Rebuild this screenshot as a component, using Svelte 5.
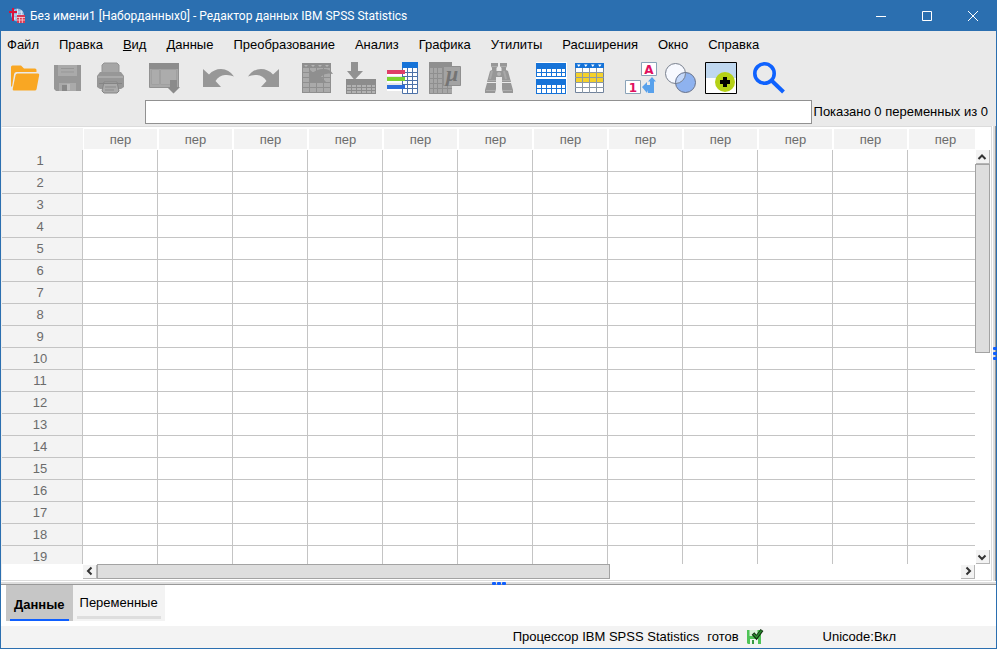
<script>
  const menus = ['Файл', 'Правка', 'Вид', 'Данные', 'Преобразование', 'Анализ', 'Графика', 'Утилиты', 'Расширения', 'Окно', 'Справка'];
  const columns = Array.from({ length: 12 }, (_, i) => i);
  const rows = Array.from({ length: 19 }, (_, i) => i + 1);
  let query = $state('');
  let tab = $state('data');
</script>

<div class="window">
  <header class="titlebar">
    <svg class="logo" viewBox="0 0 16 16" aria-hidden="true">
      <circle cx="8.5" cy="7" r="6.5" fill="#8fb4dc" />
      <path d="M3 4h11M2.500 7h12M4 10h10M8.500 1v12M5 2q-2 5 1 10M12 2q2 5-1 10" stroke="#e6f0fa" stroke-width=".8" fill="none" />
      <path d="M0 3h3V0h2v3h3v2H5v8H3V5H0z" fill="#d8123c" />
      <path d="M8 7h8v8H8z" fill="#d93a55" />
      <path d="M8 9.500h8M8 12h8M10.500 9v6M13.300 9v6" stroke="#fbd5dc" stroke-width=".8" />
    </svg>
    <span class="title">Без имени1 [Наборданных0] - Редактор данных IBM SPSS Statistics</span>
    <div class="caption">
      <button aria-label="Свернуть"><svg viewBox="0 0 10 10"><path d="M0 5.500h10" /></svg></button>
      <button aria-label="Развернуть"><svg viewBox="0 0 10 10"><path d="M.5.5h9v9h-9z" /></svg></button>
      <button aria-label="Закрыть"><svg viewBox="0 0 10 10"><path d="M0 0l10 10M10 0L0 10" /></svg></button>
    </div>
  </header>

  <nav class="menubar">
    {#each menus as item}
      <button>{#if item === 'Вид'}<u>В</u>ид{:else}{item}{/if}</button>
    {/each}
  </nav>

  <div class="toolbar">
    <div class="group">
      <button aria-label="Открыть">
        <svg viewBox="0 0 32 32"><path d="M2 5q0-1.500 1.500-1.500h8.500l3 3h11q1.500 0 1.500 1.500v2H7.500q-2 0-2.400 2L3 25 2 24z" fill="#f9a723" /><path d="M8.500 11.500H29q1.500 0 1.200 1.500l-2.600 14q-.3 1.500-1.800 1.500H5q-1.500 0-1.300-1.500L6.600 13q.3-1.500 1.900-1.500z" fill="#f9a723" /></svg>
      </button>
      <button aria-label="Сохранить">
        <svg viewBox="0 0 32 32"><path d="M2 3h27v26H4l-2-2z" fill="#979797" /><path d="M6 3h19v11H6zM7 21h17v8H7z" fill="#aaa" /><path d="M9 6.500h13M9 10h13" stroke="#979797" /><path d="M10 23h5v6h-5z" fill="#888" /><path d="M15 22h3v6h-3z" fill="#bbb" /></svg>
      </button>
      <button aria-label="Печать">
        <svg viewBox="0 0 32 32"><path d="M9 1h13l2 2v8H7V3z" fill="#a6a6a6" stroke="#949494" /><path d="M5 10h21l3 4v11l-3 2H5l-3-2V14z" fill="#979797" /><path d="M3 15h25" stroke="#aaa" stroke-width="2" /><path d="M9 20h13l2 9-2 2H9l-2-2z" fill="#aaa" stroke="#858585" /><path d="M4 21.500h23" stroke="#858585" /><path d="M10 25h11M10 28h9" stroke="#8b8b8b" /></svg>
      </button>
    </div>
    <div class="group">
      <button aria-label="Недавние диалоги">
        <svg viewBox="0 0 32 32"><path d="M.5 1.500h29v24h-29z" fill="#a8a8a8" stroke="#929292" /><path d="M0 1h30v6H0z" fill="#8d8d8d" /><path d="M2.500 7.500h8v15h-8zM11.500 7.500h16v15h-16z" fill="#acacac" stroke="#a0a0a0" /><path d="M21 18h7v7h3l-6.500 6.500L18 25h3z" fill="#8b8b8b" /></svg>
      </button>
    </div>
    <div class="group">
      <button aria-label="Отменить">
        <svg viewBox="0 0 32 32"><path d="M0 7l6 5.500Q11 7 18 7q8 0 13 7.500-4-2-9-1.500-6 .5-9.500 6l5.500 6H0z" fill="#979797" /></svg>
      </button>
      <button aria-label="Повторить">
        <svg viewBox="0 0 32 32"><path d="M33 7l-6 5.500Q22 7 15 7 7 7 2 14.500q4-2 9-1.500 6 .5 9.500 6L15 25h18z" fill="#979797" /></svg>
      </button>
    </div>
    <div class="group">
      <button aria-label="Перейти к наблюдению">
        <svg viewBox="0 0 32 32"><path d="M2 1h29v30H2z" fill="#8f8f8f" /><path d="M3 6h6v4H3zM10 6h6v4h-6zM17 6h6v4h-6zM24 6h6v4h-6zM3 11h6v4H3zM10 11h6v4h-6zM17 11h6v4h-6zM24 11h6v4h-6zM3 16h6v4H3zM10 16h6v4h-6zM17 16h6v4h-6zM24 16h6v4h-6zM3 21h6v4H3zM10 21h6v4h-6zM17 21h6v4h-6zM24 21h6v4h-6zM3 26h6v4H3zM10 26h6v4h-6zM17 26h6v4h-6zM24 26h6v4h-6z" fill="#aaa" /><path d="M4 3h4l-2 2zM11 3h4l-2 2zM18 3h4l-2 2zM25 3h4l-2 2z" fill="#b5b5b5" /><path d="M9 7l4 3.500q5-4 11-3.500 6 0 9 5-7-2-12 2.500l5 5.500H9z" fill="#8f8f8f" /></svg>
      </button>
      <button aria-label="Перейти к переменной">
        <svg viewBox="0 0 32 32"><path d="M3 17h30v15H3z" fill="#8c8c8c" /><path d="M4 23h28v8H4z" fill="#b2b2b2" /><path d="M4 25.500h28M4 28.500h28M8.500 23v8M13.500 23v8M18.500 23v8M23.500 23v8M28.500 23v8" stroke="#8c8c8c" /><path d="M8 0h7v9h5l-8.500 9L4 9h4z" fill="#929292" /></svg>
      </button>
      <button aria-label="Переменные">
        <svg viewBox="0 0 32 32"><path d="M16.500.5h15v31h-15z" fill="#fff" stroke="#4d72a8" /><path d="M16 0h16v6H16z" fill="#1673d8" /><path d="M16 10.500h16M16 14.500h16M16 18.500h16M16 22.500h16M16 26.500h16M21.500 6v26M26.500 6v26" stroke="#4d72a8" /><path d="M1 12h15v2H1zM1 19h15v2H1zM1 27h15v2H1z" fill="#fff" /><path d="M1 8h18v4H1z" fill="#df3f68" /><path d="M1 15h18v4H1z" fill="#7bd331" /><path d="M1 23h18v4H1z" fill="#2c6edb" /></svg>
      </button>
      <button aria-label="Описательные статистики">
        <svg viewBox="0 0 32 32"><path d="M0 0h23v32H0z" fill="#8f8f8f" /><path d="M0 6h23v26H0z" fill="#a6a6a6" /><path d="M.5 6v25.500h22M0 11.500h23M0 16.500h23M0 21.500h23M0 26.500h23M4.500 5v27M8.500 5v27M13.500 5v27M18.500 5v27" stroke="#8f8f8f" fill="none" /><path d="M14.500 4.500h17v19h-17z" fill="#a3a3a3" stroke="#8f8f8f" /><text x="17" y="19" font-family="Liberation Serif, serif" font-style="italic" font-weight="bold" font-size="22" fill="#747474">μ</text></svg>
      </button>
    </div>
    <div class="group">
      <button aria-label="Найти">
        <svg viewBox="0 0 32 32"><path d="M8 1h7v3l-1.500 2v3h5V6L17 4V1h7v3l-1 2v2l2 1 3 11H19v-5h-6v5H4L7 9l2-1V6L8 4zM4 21h9v6l-1 4H2v-3zM19 21h9l2 7v3H20l-1-4z" fill="#979797" /><path d="M8 4.500h6M18 4.500h6M5 18.500h8M19 18.500h8M3 28.500h9M20 28.500h9" stroke="#adadad" /><path d="M9 9l-2 8M21 9l2 8" stroke="#a8a8a8" stroke-width="2" /><circle cx="16" cy="12" r="2" fill="#b5b5b5" /></svg>
      </button>
    </div>
    <div class="group tight">
      <button aria-label="Расщепить файл">
        <svg viewBox="0 0 32 32"><path d="M3 0h31v32H3z" fill="#fff" /><path d="M3 1h30v14H3zM3 17h30v15H3z" fill="#1673d8" /><path d="M4 7h28v7H4zM4 23h28v8H4z" fill="#fff" /><path d="M3 10.500h30M3 26.500h30M8.500 7v8M13.500 7v8M18.500 7v8M23.500 7v8M28.500 7v8M8.500 23v8M13.500 23v8M18.500 23v8M23.500 23v8M28.500 23v8" stroke="#1673d8" /></svg>
      </button>
      <button aria-label="Отобрать наблюдения">
        <svg viewBox="0 0 32 32"><path d="M2.500 1.500h28v29h-28z" fill="#fff" stroke="#71839c" /><path d="M2 1h29v5H2z" fill="#1673d8" /><path d="M3 11h27v9H3z" fill="#f4d12b" /><path d="M2 10.500h29M2 15.500h29M2 20.500h29M2 25.500h29M9.500 6v25M16.500 6v25M23.500 6v25" stroke="#8b98a5" /><path d="M4 2.500h3.500L5.800 5zM11 2.500h3.500L12.800 5zM18 2.500h3.500L19.800 5zM25 2.500h3.500L26.800 5z" fill="#fff" /></svg>
      </button>
    </div>
    <div class="group tight">
      <button aria-label="Метки значений">
        <svg viewBox="0 0 32 32"><path d="M18.500.5h15v13h-15zM2.500 18.500h15v13h-15z" fill="#fff" stroke="#8aa3b8" /><text x="26" y="11.500" text-anchor="middle" font-family="DejaVu Sans, sans-serif" font-weight="bold" font-size="12" fill="#e0115f">A</text><text x="10" y="29.500" text-anchor="middle" font-family="DejaVu Sans, sans-serif" font-weight="bold" font-size="12" fill="#e0115f">1</text><path d="M29 15l4 4.500h-2V31h-6l-1-3v3l-5-6 5-5v3h3v-3.500h-2z" fill="#58a1ec" /></svg>
      </button>
      <button aria-label="Наборы переменных">
        <svg viewBox="0 0 32 32"><circle cx="12.500" cy="11.500" r="10" fill="#f7f9ff" /><circle cx="22.500" cy="20.500" r="10" fill="#7ea8f0" fill-opacity=".85" /><path d="M22.500 11.500A10 10 0 0 1 12.500 21.400 10 10 0 0 1 22.500 10.500z" fill="#c4d8fa" /><circle cx="12.500" cy="11.500" r="10" fill="none" stroke="#78808e" /><circle cx="22.500" cy="20.500" r="10" fill="none" stroke="#66718a" /></svg>
      </button>
      <button aria-label="Показать все переменные">
        <svg viewBox="0 0 32 32"><path d="M2.500.5h31v31h-31z" fill="#fff" stroke="#000" /><path d="M3 1h30v15H3z" fill="#bfd7ef" /><circle cx="22" cy="20" r="10" fill="#b5d117" /><path d="M20 15h4v3h3v4h-3v3h-4v-3h-3v-4h3z" fill="#000" /></svg>
      </button>
    </div>
    <div class="group tight">
      <button aria-label="Поиск">
        <svg viewBox="0 0 32 32"><circle cx="11.500" cy="11.500" r="9.700" fill="none" stroke="#0f62fe" stroke-width="3.600" /><path d="M18.500 18.500L30.500 30" stroke="#0f62fe" stroke-width="4" /></svg>
      </button>
    </div>
  </div>

  <div class="editor-line">
    <input id="cell" type="text" bind:value={query} />
    <label for="cell">Показано 0 переменных из 0</label>
  </div>

  <main class="workspace">
    <div class="pane">
      <div class="upper">
        <div class="sheet">
          <table>
            <thead>
              <tr><td class="corner"></td>{#each columns as c (c)}<th scope="col"><span>пер</span></th>{/each}</tr>
            </thead>
            <tbody>
              {#each rows as r (r)}
                <tr><th scope="row">{r}</th>{#each columns as c (c)}<td></td>{/each}</tr>
              {/each}
            </tbody>
          </table>
        </div>
        <div class="vscroll">
          <button class="step" aria-label="Вверх"><svg viewBox="0 0 10 10"><path d="M1.500 7L5 3.500 8.500 7" /></svg></button>
          <div class="track"><div class="thumb"></div></div>
          <button class="step" aria-label="Вниз"><svg viewBox="0 0 10 10"><path d="M1.500 3.500L5 7l3.500-3.500" /></svg></button>
        </div>
      </div>
      <div class="hscroll">
        <button class="step" aria-label="Влево"><svg viewBox="0 0 10 10"><path d="M6.500 1.500L3 5l3.500 3.500" /></svg></button>
        <div class="track"><div class="thumb"></div></div>
        <button class="step" aria-label="Вправо"><svg viewBox="0 0 10 10"><path d="M3.500 1.500L7 5 3.500 8.500" /></svg></button>
      </div>
    </div>
    <div class="split-v"><span class="dots"><i></i><i></i><i></i></span></div>
  </main>
  <div class="split-h"><span class="dots"><i></i><i></i><i></i></span></div>

  <div class="tabs" role="tablist">
    <button role="tab" class:active={tab === 'data'} aria-selected={tab === 'data'} onclick={() => (tab = 'data')}><span>Данные</span></button>
    <button role="tab" class:active={tab === 'vars'} aria-selected={tab === 'vars'} onclick={() => (tab = 'vars')}><span>Переменные</span></button>
  </div>

  <footer class="status">
    <span>Процессор IBM SPSS Statistics</span>
    <span>готов</span>
    <svg viewBox="0 0 16 16" aria-hidden="true"><path d="M0 1h14v14H1l-1-1z" fill="#4fc457" /><path d="M2.500 1h8v6h-8z" fill="#d9f2da" /><path d="M3 10h8v5H3z" fill="#eef8ee" /><path d="M5 11h2v4H5z" fill="#3a9a42" /><path d="M6 4.500l3.500 4L15 1" fill="none" stroke="#10300f" stroke-width="3.500" /><path d="M6.500 5L9.500 8 14.500 1.500" fill="none" stroke="#2a8a30" stroke-width="1.500" /></svg>
    <span class="unicode">Unicode:Вкл</span>
  </footer>
</div>

<style>
  :global(body) { margin: 0; }
  .window {
    box-sizing: border-box;
    height: 100vh;
    display: flex;
    flex-direction: column;
    border: 1px solid #2b6fb0;
    border-top: 0;
    background: #fff;
    font: 13px/16px "Liberation Sans", Arial, sans-serif;
    color: #000;
  }
  button { border: 0; padding: 0; margin: 0; background: none; font: inherit; color: inherit; }
  svg { display: block; overflow: visible; }

  .titlebar { display: flex; align-items: center; height: 31px; flex: none; background: #2b6fb0; color: #fff; padding-left: 8px; }
  .logo { width: 16px; height: 16px; margin-right: 5px; }
  .title { flex: 1; font: 12px/16px Roboto, "Noto Sans", sans-serif; white-space: nowrap; }
  .caption { display: flex; }
  .caption button { width: 46px; height: 31px; display: grid; place-items: center; }
  .caption svg { width: 10px; height: 10px; fill: none; stroke: #fff; stroke-width: 1; }

  .menubar { display: flex; gap: 20px; flex: none; background: #eaeaea; padding: 6px 6px; height: 16px; white-space: nowrap; }
  .toolbar { display: flex; flex: none; background: #eaeaea; padding: 3px 8px 6px; }
  .group { display: flex; gap: 11px; margin-right: 22px; }
  .group.tight { gap: 8px; margin-right: 18px; }
  .group:nth-child(5) { margin-right: 18px; }
  .toolbar button, .toolbar svg { width: 32px; height: 32px; }

  .editor-line { display: flex; align-items: center; flex: none; background: #eaeaea; padding: 0 8px 2px 144px; }
  .editor-line input { box-sizing: border-box; flex: 1; min-width: 0; height: 24px; border: 1px solid #919191; background: #fff; padding: 0 4px; font: inherit; outline: 0; }
  .editor-line label { margin-left: 2px; white-space: nowrap; }

  .workspace { display: flex; flex: 1; min-height: 0; }
  .pane { flex: 1; min-width: 0; display: flex; flex-direction: column; border: 1px solid #dcdcdc; border-left-color: #eee; padding-top: 1px; }
  .upper { display: flex; flex: 1; min-height: 0; }
  .sheet { flex: 1; min-width: 0; overflow: hidden; }
  table { table-layout: fixed; width: 981px; border-collapse: separate; border-spacing: 0; color: #6b6b6b; }
  th, td { box-sizing: border-box; padding: 0; font-weight: normal; width: 75px; height: 22px; border-right: 1px solid #c4c4c4; border-bottom: 1px solid #c4c4c4; }
  thead th { border: 0; padding: 1px 1px 1px 1px; }
  thead th span { display: block; height: 20px; line-height: 21px; background: #f3f3f3; }
  thead .corner { width: 81px; border: 0; background: #f3f3f3; }
  tbody th { width: 81px; background: #f3f3f3; padding-right: 4px; }

  .step { box-sizing: border-box; flex: none; width: 14px; height: 14px; display: grid; place-items: center; background: #f3f3f3; border: solid #b5b5b5; border-width: 0 1px 1px 0; }
  .step svg { width: 10px; height: 10px; fill: none; stroke: #333; stroke-width: 2; }
  .track { flex: 1; }
  .thumb { box-sizing: border-box; background: #dedede; border: 1px solid #a3a3a3; }
  .vscroll { display: flex; flex-direction: column; width: 15px; margin-right: 1px; padding-top: 22px; align-items: center; }
  .vscroll .track { width: 15px; }
  .vscroll .thumb { height: 49%; }
  .hscroll { display: flex; flex: none; height: 15px; padding: 0 16px 1px 81px; align-items: center; }
  .hscroll .track { height: 15px; }
  .hscroll .thumb { width: 59.400%; height: 15px; }

  .split-v { flex: none; box-sizing: border-box; width: 4px; border-left: 1px solid #fff; border-right: 1px solid #999; background: #dedede; display: grid; place-items: center; }
  .split-h { flex: none; box-sizing: border-box; height: 4px; border-top: 1px solid #fff; border-bottom: 1px solid #999; background: #dedede; display: grid; place-items: center; }
  .dots { display: flex; gap: 1px; }
  .dots i { width: 4px; height: 3px; border-radius: 1px; background: #0f5fff; }
  .split-v .dots { flex-direction: column; gap: 2px; }

  .tabs { display: flex; flex: none; padding: 0 5px 5px; }
  .tabs button { box-sizing: border-box; height: 36px; padding: 0 4px 2px; background: #f3f3f3; }
  .tabs span { display: block; box-sizing: border-box; height: 33px; padding: 9px 3px 0; border-bottom: 3px solid #dedede; }
  .tabs button.active { background: #c6c6c6; padding: 0 4px; }
  .tabs .active span { height: 36px; padding: 12px 4px 0; border-bottom: 2px solid #0f5fff; font-weight: bold; }

  .status { display: flex; flex: none; align-items: center; justify-content: flex-end; gap: 8px; height: 22px; padding-right: 100px; background: #f3f3f3; white-space: nowrap; }
  .status svg { width: 16px; height: 16px; }
  .unicode { margin-left: 52px; }
</style>
